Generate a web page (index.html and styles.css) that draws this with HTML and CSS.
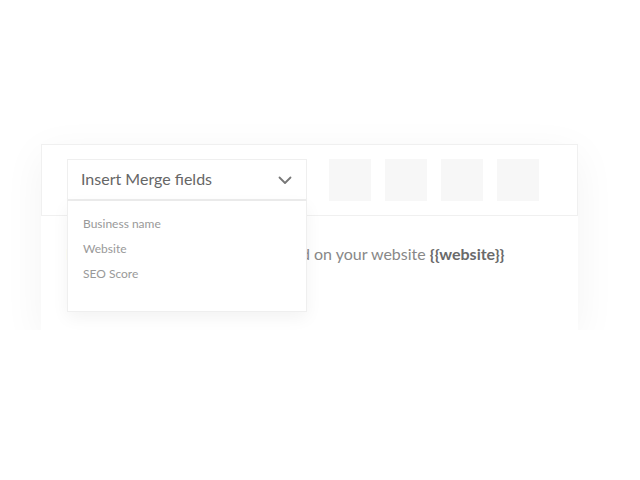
FILE: index.html
```html
<!DOCTYPE html>
<html lang="en">
<head>
    <meta charset="UTF-8">
    <meta name="viewport" content="width=device-width, initial-scale=1.0">
    <title>Email Editor</title>
    <link rel="stylesheet" href="styles.css">
</head>
<body>

    <div class="editor">
        <div class="toolbar">
            <div class="merge">
                <div class="merge-head">
                    <span>Insert Merge fields</span>
                    <svg class="chevron" width="14" height="9" viewBox="0 0 14 9">
                        <path d="M1.5 1.5 L7 7 L12.5 1.5" fill="none" stroke="#777" stroke-width="1.8" stroke-linecap="round" stroke-linejoin="round"/>
                    </svg>
                </div>
                <ul class="merge-menu">
                    <li>Business name</li>
                    <li>Website</li>
                    <li>SEO Score</li>
                </ul>
            </div>

            <div class="tools">
                <div class="tool"></div>
                <div class="tool"></div>
                <div class="tool"></div>
                <div class="tool"></div>
            </div>
        </div>

        <div class="content">
            <p>Hi, here are all the issues we found on your website <b>{{website}}</b></p>
        </div>
    </div>

</body>
</html>
```

FILE: styles.css
```css
body {
    font-family: Lato, "Open Sans", sans-serif;
    background-color: #fff;
    margin: 0;
    padding: 0;
}

.editor {
    width: 537px;
    margin: 144px 0 0 41px;
    background-color: #fff;
    box-shadow: 0 10px 40px rgba(0, 0, 0, 0.05);
}

.toolbar {
    display: flex;
    align-items: flex-start;
    padding: 14px 25px;
    border: 1px solid #f0f0f0;
}

.merge {
    position: relative;
    width: 240px;
}

.merge-head {
    display: flex;
    align-items: center;
    justify-content: space-between;
    padding: 0 14px 2px 13px;
    border: 1px solid #efefef;
    border-bottom: 2px solid #ececec;
    box-sizing: border-box;
    height: 42px;
    font-size: 16px;
    color: #666;
}

.chevron {
    margin-top: 4px;
}

.merge-menu {
    position: absolute;
    top: 42px;
    left: 0;
    right: 0;
    margin: 0;
    padding: 10px 15px 25px;
    list-style: none;
    background-color: #fff;
    border: 1px solid #efefef;
    border-top: none;
    box-shadow: 0 6px 16px rgba(0, 0, 0, 0.05);
    z-index: 2;
}

.merge-menu li {
    font-size: 12px;
    line-height: 25px;
    color: #999;
}

.tools {
    display: flex;
    gap: 14px;
    margin-left: 22px;
}

.tool {
    width: 42px;
    height: 42px;
    background-color: #f7f7f7;
}

.content {
    height: 114px;
    padding: 0 25px;
}

.content p {
    margin: 0;
    padding-top: 28px;
    font-size: 16px;
    color: #888;
}

.content b {
    color: #6a6a6a;
    font-weight: 700;
}
```
